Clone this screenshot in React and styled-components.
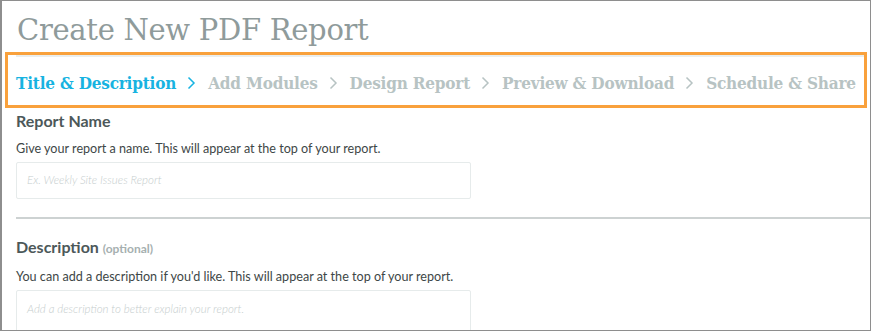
import React from 'react';
import styled, { createGlobalStyle } from 'styled-components';

const GlobalStyle = createGlobalStyle`
  html, body {
    margin: 0;
    padding: 0;
    background: #ffffff;
  }
`;

const Frame = styled.div`
  box-sizing: border-box;
  width: 871px;
  height: 331px;
  border: 1px solid #8e8e8e;
  border-left-width: 2px;
  overflow: hidden;
  background: #ffffff;
`;

const Title = styled.h1`
  margin: 0;
  padding: 11px 0 0 15px;
  height: 40px;
  font-family: "DejaVu Serif", "Liberation Serif", serif;
  font-weight: 300;
  font-size: 29px;
  line-height: 36px;
  color: #8f9b9b;
  letter-spacing: -0.3px;
`;

const Highlight = styled.div`
  margin: 0 3px;
  border: 3px solid #f9a13c;
  height: 50px;
`;

const Steps = styled.nav`
  box-sizing: border-box;
  display: flex;
  align-items: center;
  height: 50px;
  margin-left: 8px;
  border-top: 2px solid #eaeeee;
  padding: 3px 0 0 0;
`;

const Step = styled.span`
  font-family: "DejaVu Serif Condensed", "DejaVu Serif", "Liberation Serif", serif;
  font-weight: 700;
  font-size: 17px;
  letter-spacing: -0.2px;
  color: ${p => (p.$active ? '#17b3e1' : '#b7c3c3')};
  white-space: nowrap;
`;

const Chevron = styled.svg`
  width: 9px;
  height: 14px;
  margin: 1px 12px 0 11px;
  flex: none;
  stroke: ${p => (p.$active ? '#17b3e1' : '#b7c3c3')};
`;

const Form = styled.section`
  padding-top: 3px;
`;

const Field = styled.div`
  padding-left: 14px;
`;

const Label = styled.h2`
  margin: 0;
  font-family: Lato, "Noto Sans", sans-serif;
  font-weight: 700;
  font-size: 16px;
  line-height: 20px;
  color: #4c5859;
`;

const Optional = styled.span`
  font-size: 12px;
  color: #a6b0b0;
`;

const Help = styled.p`
  margin: 9px 0 4px;
  font-family: Lato, "Noto Sans", sans-serif;
  font-size: 12.6px;
  line-height: 18px;
  color: #3e4747;
`;

const Input = styled.div`
  box-sizing: border-box;
  width: 455px;
  height: ${p => (p.$tall ? '80px' : '37px')};
  border: 1px solid #e6ebeb;
  border-radius: 2px;
  padding: ${p => (p.$tall ? '11px' : '10px')} 10px;
  font-family: Lato, "Noto Sans", sans-serif;
  font-style: italic;
  font-weight: 300;
  font-size: 11.5px;
  color: #c5cdcd;
`;

const Divider = styled.hr`
  margin: 18px 0 18px 14px;
  border: none;
  border-top: 2px solid #cdd2d2;
`;

const steps = ['Title & Description', 'Add Modules', 'Design Report', 'Preview & Download', 'Schedule & Share'];

const Arrow = ({ active }) => (
  <Chevron $active={active} viewBox="0 0 9 14" fill="none" strokeWidth="1.5">
    <polyline points="1.5,1.5 7,7 1.5,12.5" />
  </Chevron>
);

const App = () => (
  <>
    <GlobalStyle />
    <Frame>
      <Title>Create New PDF Report</Title>
      <Highlight>
        <Steps>
          {steps.map((s, i) => (
            <React.Fragment key={s}>
              <Step $active={i === 0}>{s}</Step>
              {i < steps.length - 1 && <Arrow active={i === 0} />}
            </React.Fragment>
          ))}
        </Steps>
      </Highlight>
      <Form>
        <Field>
          <Label>Report Name</Label>
          <Help>Give your report a name. This will appear at the top of your report.</Help>
          <Input>Ex. Weekly Site Issues Report</Input>
        </Field>
        <Divider />
        <Field>
          <Label>Description <Optional>(optional)</Optional></Label>
          <Help>You can add a description if you'd like. This will appear at the top of your report.</Help>
          <Input $tall>Add a description to better explain your report.</Input>
        </Field>
      </Form>
    </Frame>
  </>
);

export default App;
